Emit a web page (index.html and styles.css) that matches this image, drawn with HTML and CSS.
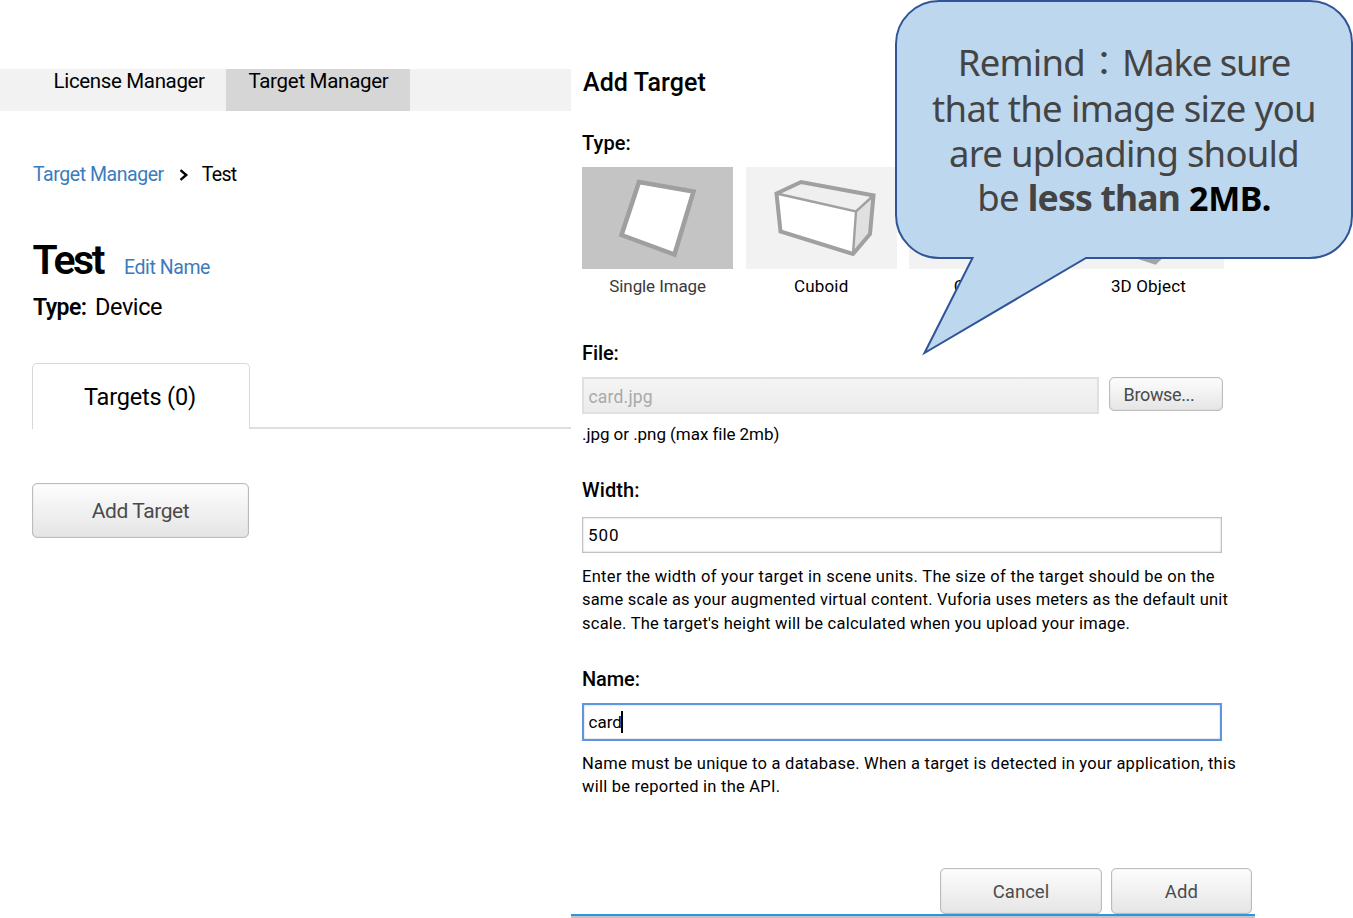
FILE: index.html
```html
<!DOCTYPE html>
<html lang="en">
<head>
<meta charset="utf-8">
<title>Target Manager</title>
<link rel="stylesheet" href="styles.css">
</head>
<body>
<div class="page">
  <main class="database">
    <nav class="nav">
      <a class="nav-item">License Manager</a>
      <a class="nav-item active">Target Manager</a>
    </nav>
    <div class="crumbs">
      <a class="link">Target Manager</a>
      <svg class="chevron" width="10" height="12" viewBox="0 0 10 12"><path d="M1.500 1.200 7.200 6 1.500 10.800" fill="none" stroke="#000" stroke-width="2.400"/></svg>
      <span class="crumb-now">Test</span>
    </div>
    <div class="title-row">
      <h1 class="title">Test</h1>
      <a class="edit">Edit Name</a>
    </div>
    <div class="type-row"><b class="type-key">Type:</b><span class="type-value">Device</span></div>
    <div class="tabs">
      <div class="tab">Targets (0)</div>
      <div class="tab-rest"></div>
    </div>
    <button class="btn btn-main">Add Target</button>
  </main>
  <section class="dialog">
    <h2 class="dialog-title">Add Target</h2>
    <h3 class="label label-type">Type:</h3>
    <div class="types">
      <div class="type">
        <div class="tile selected">
          <svg width="151" height="102" viewBox="0 0 151 102"><path d="M57 15 111.500 24.500 92.500 87.500 39.500 68Z" fill="#fff" stroke="#9f9f9f" stroke-width="4.500"/></svg>
        </div>
        <span class="caption dim">Single Image</span>
      </div>
      <div class="type">
        <div class="tile">
          <svg width="151" height="102" viewBox="0 0 151 102"><path d="M30.500 26.500 55 15 127.500 28.500 124 67 107 87 34.500 64.500Z" fill="#fff"/><path d="M30.500 26.500 55 15 127.500 28.500 110 44.500Z" fill="#efefef"/><path d="M127.500 28.500 124 67 107 87 110 44.500Z" fill="#e0e0e0"/><path d="M30.500 26.500 110 44.500 127.500 28.500M110 44.500 107 87" fill="none" stroke="#a0a0a0" stroke-width="2.400"/><path d="M30.500 26.500 55 15 127.500 28.500 124 67 107 87 34.500 64.500Z" fill="none" stroke="#a0a0a0" stroke-width="4"/></svg>
        </div>
        <span class="caption">Cuboid</span>
      </div>
      <div class="type">
        <div class="tile"></div>
        <span class="caption">Cylinder</span>
      </div>
      <div class="type">
        <div class="tile">
          <svg width="151" height="102" viewBox="0 0 151 102"><path d="M30 30 76 15 112 28 108 70 82 95 30 78Z" fill="#e4e4e4" stroke="#a4a4a4" stroke-width="5"/></svg>
        </div>
        <span class="caption">3D Object</span>
      </div>
    </div>
    <h3 class="label label-file">File:</h3>
    <div class="file-row">
      <div class="file-name">card.jpg</div>
      <button class="btn btn-browse">Browse...</button>
    </div>
    <p class="hint">.jpg or .png (max file 2mb)</p>
    <h3 class="label label-width">Width:</h3>
    <div class="field field-width">500</div>
    <p class="help help-width"><span class="l1">Enter the width of your target in scene units. The size of the target should be on the</span><br><span class="l2">same scale as your augmented virtual content. Vuforia uses meters as the default unit</span><br>scale. The target's height will be calculated when you upload your image.</p>
    <h3 class="label label-name">Name:</h3>
    <div class="field focused">card<span class="caret"></span></div>
    <p class="help help-name">Name must be unique to a database. When a target is detected in your application, this<br>will be reported in the API.</p>
    <div class="actions">
      <button class="btn btn-cancel">Cancel</button>
      <button class="btn btn-add">Add</button>
    </div>
    <div class="dialog-edge"></div>
  </section>
  <aside class="callout">
    <svg class="bubble" width="460" height="358" viewBox="0 0 460 358"><path d="M44 1H415A42 42 0 0 1 457 43V216A42 42 0 0 1 415 258H191L29.500 353 77.500 258H44A43 43 0 0 1 1 215V44A43 43 0 0 1 44 1Z" fill="#bdd7ee" stroke="#2f5597" stroke-width="2"/></svg>
    <div class="message">
      <div class="line first"><span class="remind">Remind</span><span class="colon" lang="zh-TW">：</span><span class="make">Make sure</span></div>
      <div class="line second">that the image size you</div>
      <div class="line third">are uploading should</div>
      <div class="line fourth"><span>be </span><b class="less">less than</b><b class="limit">2MB.</b></div>
    </div>
  </aside>
</div>
</body>
</html>
```
FILE: styles.css
```css
* { box-sizing: border-box; }
body { margin: 0; background: #fff; color: #000; font-family: Roboto, "Liberation Sans", sans-serif; }
h1, h2, h3, p { margin: 0; }
.page { position: relative; display: flex; width: 1353px; height: 918px; overflow: hidden; white-space: nowrap; }

/* database page */
.database { width: 571px; padding-top: 69px; }
.nav { display: flex; height: 42px; padding-left: 32px; background: #f2f2f2; font-size: 20.5px; line-height: 25px; letter-spacing: -0.35px; }
.nav-item { width: 194.4px; padding-left: 21.6px; }
.nav-item.active { width: 184px; padding-left: 22px; background: #d6d6d6; letter-spacing: -0.28px; }
.crumbs { display: flex; align-items: center; margin: 52px 0 0 33px; font-size: 19.5px; line-height: 24px; letter-spacing: -0.45px; }
.link, .edit { color: #3b7bbd; }
.chevron { margin: 0 13px 1px 15px; }
.crumb-now { letter-spacing: -0.65px; }
.title-row { display: flex; align-items: baseline; margin: 49px 0 0 33px; }
.title { width: 91.5px; margin-left: -0.5px; font-size: 41px; line-height: 48px; font-weight: 600; letter-spacing: -2.4px; }
.edit { font-size: 19.5px; letter-spacing: -0.42px; }
.type-row { display: flex; align-items: baseline; height: 28px; margin: 9px 0 0 33px; font-size: 23.5px; line-height: 28px; letter-spacing: -0.42px; }
.type-key { width: 62px; font-size: 23px; font-weight: 600; letter-spacing: -0.55px; }
.tabs { display: flex; align-items: flex-end; margin: 42px 0 0 32px; height: 66px; }
.tab { width: 218px; height: 66px; border: 1.5px solid #d9d9d9; border-bottom: 0; border-radius: 5px 5px 0 0; text-align: center; font-size: 23.5px; line-height: 67px; letter-spacing: -0.18px; padding-right: 2px; }
.tab-rest { flex: 1; height: 2px; background: #dedede; }
.btn { display: block; padding: 0; border: 1.5px solid #bcbcbc; border-radius: 5px; background: linear-gradient(#fdfdfd, #e5e5e5); box-shadow: inset 0 0 1px #aaa; color: #4b4b4b; font-family: Roboto, "Liberation Sans", sans-serif; text-align: center; }
.btn-main { width: 217px; height: 55px; margin: 54px 0 0 32px; font-size: 21px; letter-spacing: -0.42px; padding-top: 1px; }

/* add target dialog */
.dialog { width: 684px; padding: 68px 0 0 11px; }
.dialog-title { padding-left: 1px; font-size: 25px; line-height: 30px; font-weight: 500; letter-spacing: 0.1px; }
.label { font-size: 20px; line-height: 24px; font-weight: 500; letter-spacing: 0.1px; }
.label-type { margin-top: 33px; }
.types { display: flex; gap: 12.3px; margin-top: 12px; }
.type { display: flex; flex-direction: column; align-items: center; width: 151.3px; }
.tile { width: 100%; height: 102px; background: #f2f2f2; }
.tile.selected { background: #c4c4c4; }
.tile svg { display: block; }
.caption { margin-top: 6px; font-size: 17px; line-height: 22px; letter-spacing: 0.15px; }
.caption.dim { color: #3a3a3a; letter-spacing: -0.1px; }
.label-file { margin-top: 44px; letter-spacing: -0.1px; }
.file-row { display: flex; align-items: flex-start; gap: 10px; margin-top: 12px; }
.file-name { width: 517px; height: 37px; padding-left: 4.5px; border: 2px solid #e0e0e0; background: linear-gradient(#f4f4f4, #ececec); color: #a9a9a9; font-size: 17.5px; line-height: 36px; letter-spacing: 0.2px; }
.btn-browse { width: 114px; height: 34px; padding-right: 14px; font-size: 18px; letter-spacing: -0.35px; }
.hint { margin-top: 8px; font-size: 17px; line-height: 24px; letter-spacing: -0.05px; }
.label-width { margin-top: 32px; }
.field { width: 640px; height: 37px; padding-left: 5px; border: 1.5px solid #c2c2c2; font-size: 17px; line-height: 35px; box-shadow: inset 0 0 2px #bbb; }
.field-width { height: 36px; margin-top: 15px; letter-spacing: 0.9px; }
.help { font-size: 16.5px; line-height: 23.5px; letter-spacing: 0.24px; }
.l1 { letter-spacing: 0.31px; }
.l2 { letter-spacing: 0.19px; }
.help-width { margin-top: 11.5px; }
.label-name { margin-top: 32px; letter-spacing: -0.1px; }
.focused { display: flex; align-items: center; height: 38px; margin-top: 12px; padding-left: 4.5px; border: 2px solid #5f94e0; }
.caret { width: 1.5px; height: 22px; margin-left: -0.5px; background: #000; }
.help-name { margin-top: 10.5px; }
.actions { display: flex; justify-content: flex-end; gap: 9px; margin: 69.5px 3px 0 0; }
.btn-cancel, .btn-add { height: 46px; padding-top: 1px; font-size: 18.5px; }
.btn-cancel { width: 162px; }
.btn-add { width: 141px; letter-spacing: 0.2px; }
.dialog-edge { height: 4px; margin-left: -11px; border-top: 2px solid #2f94e0; background: #c4c4c4; }

/* speech bubble lying over the dialog */
.callout { position: absolute; left: 895px; top: 0; width: 458px; }
.bubble { position: absolute; left: 0; top: 0; }
.message { position: relative; padding-top: 40px; color: #444; font-family: "Noto Sans", "Noto Sans CJK TC", sans-serif; font-size: 36.5px; text-align: center; }
.line { display: flex; justify-content: center; height: 45px; line-height: 45px; white-space: pre; letter-spacing: -0.63px; }
.first { height: 46px; letter-spacing: -0.75px; }
.colon { width: 37px; font-family: "Noto Sans CJK TC", sans-serif; font-size: 34px; line-height: 44px; }
.make { letter-spacing: -1.1px; }
.third { letter-spacing: -0.74px; }
.fourth { align-items: baseline; height: 44px; line-height: 42px; }
.less { font-size: 35.5px; font-weight: 700; letter-spacing: -0.8px; }
.limit { margin-left: 9px; color: #000; font-size: 34px; letter-spacing: -0.4px; }
```
